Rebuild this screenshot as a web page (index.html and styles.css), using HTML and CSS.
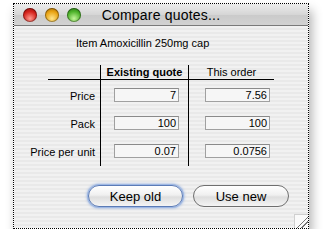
FILE: index.html
```html
<!DOCTYPE html>
<html lang="en">
<head>
  <meta charset="UTF-8" />
  <title>Compare quotes...</title>
  <link rel="stylesheet" href="styles.css">
</head>
<body>

  <div class="window">
    <div class="titlebar">
      <div class="lights">
        <span class="light red"></span>
        <span class="light yellow"></span>
        <span class="light green"></span>
      </div>
      <div class="title">Compare quotes...</div>
    </div>

    <div class="content">
      <div class="item">Item Amoxicillin 250mg cap</div>

      <div class="grid">
        <div class="label head"></div>
        <div class="cell head bold">Existing quote</div>
        <div class="cell head second">This order</div>

        <div class="rule"></div>
        <div class="cell rulecell"></div>
        <div class="cell rulecell second"></div>

        <div class="label">Price</div>
        <div class="cell"><div class="field">7</div></div>
        <div class="cell second"><div class="field">7.56</div></div>

        <div class="label">Pack</div>
        <div class="cell"><div class="field">100</div></div>
        <div class="cell second"><div class="field">100</div></div>

        <div class="label last">Price per unit</div>
        <div class="cell last"><div class="field">0.07</div></div>
        <div class="cell last second"><div class="field">0.0756</div></div>
      </div>

      <div class="buttons">
        <button class="btn default">Keep old</button>
        <button class="btn">Use new</button>
      </div>

      <div class="grip"></div>
    </div>
  </div>

</body>
</html>
```

FILE: styles.css
```css
body {
  margin: 0;
  background: #fff;
  font-family: "Liberation Sans", Arial, sans-serif;
  font-size: 11px;
  color: #000;
}
.window {
  margin: 3px 0 0 13px;
  width: 294px;
  height: 224px;
  border: 1px dotted #000;
  box-shadow: 3px 7px 10px rgba(0, 0, 0, 0.3);
  display: flex;
  flex-direction: column;
}
.titlebar {
  height: 21px;
  display: flex;
  align-items: center;
  position: relative;
  background: linear-gradient(#ececec, #d6d6d6 50%, #cacaca 51%, #d2d2d2);
  border-bottom: 1px solid #7a7a7a;
}
.lights {
  display: flex;
  gap: 8px;
  padding-left: 9px;
}
.light {
  width: 14px;
  height: 14px;
  border-radius: 50%;
  box-shadow: inset 0 0 0 1px rgba(0, 0, 0, 0.35);
}
.red {
  background: radial-gradient(circle at 50% 75%, #ff9a8f, #d5231c 55%, #8a0b08);
}
.yellow {
  background: radial-gradient(circle at 50% 75%, #ffe58a, #e9a313 55%, #9a5f00);
}
.green {
  background: radial-gradient(circle at 50% 75%, #c4f59a, #4eb32a 55%, #1e6b0c);
}
.title {
  position: absolute;
  left: 0;
  right: 0;
  text-align: center;
  font-size: 14px;
  letter-spacing: 0.2px;
}
.content {
  flex: 1;
  position: relative;
  background: repeating-linear-gradient(#f1f1f1 0, #f1f1f1 2px, #e9e9e9 2px, #e9e9e9 4px);
}
.item {
  padding: 11px 0 0 62px;
  height: 18px;
}
.grid {
  display: grid;
  grid-template-columns: 86px 88px 86px;
  margin-top: 10px;
}
.label {
  text-align: right;
  padding: 10px 5px 0 0;
  height: 18px;
  white-space: nowrap;
}
.label.head, .cell.head {
  height: 12px;
  padding: 1px 0 1px;
}
.cell {
  border-left: 1px solid #000;
  padding: 8px 0 0 13px;
  height: 20px;
}
.cell.second {
  padding-left: 16px;
}
.cell.head {
  text-align: center;
  padding-left: 0;
  padding-right: 0;
}
.cell.last, .label.last {
  height: 22px;
}
.bold {
  font-weight: bold;
}
.rule {
  height: 1px;
  margin-left: 34px;
  background: #000;
}
.rulecell {
  height: 1px;
  padding: 0;
  background: #000;
}
.field {
  width: 59px;
  height: 12px;
  line-height: 12px;
  padding: 0 2px;
  text-align: right;
  background: #f6f6f6;
  border: 1px solid #a0a0a0;
  border-top-color: #8a8a8a;
}
.buttons {
  display: flex;
  gap: 10px;
  padding: 17px 0 0 74px;
}
.btn {
  font-family: "Liberation Sans", Arial, sans-serif;
  font-size: 13px;
  height: 22px;
  padding: 0;
  width: 96px;
  border-radius: 11px;
  border: 1px solid #6f6f6f;
  background: linear-gradient(#ffffff, #f0f0f0 45%, #dedede 55%, #f4f4f4);
  color: #000;
}
.btn.default {
  width: 95px;
  border-color: #5b7bb6;
  box-shadow: 0 0 0 1px #9eb8e4, 0 0 3px 1px #8aa8dc;
}
.grip {
  position: absolute;
  right: 0;
  bottom: 0;
  width: 13px;
  height: 13px;
  border-top: 1px solid #d0d0d0;
  border-left: 1px solid #d0d0d0;
  background: linear-gradient(135deg, #fafafa 55%, #777 56%, #777 60%, #fafafa 61%, #fafafa 72%, #777 73%, #777 77%, #fafafa 78%);
}
```
